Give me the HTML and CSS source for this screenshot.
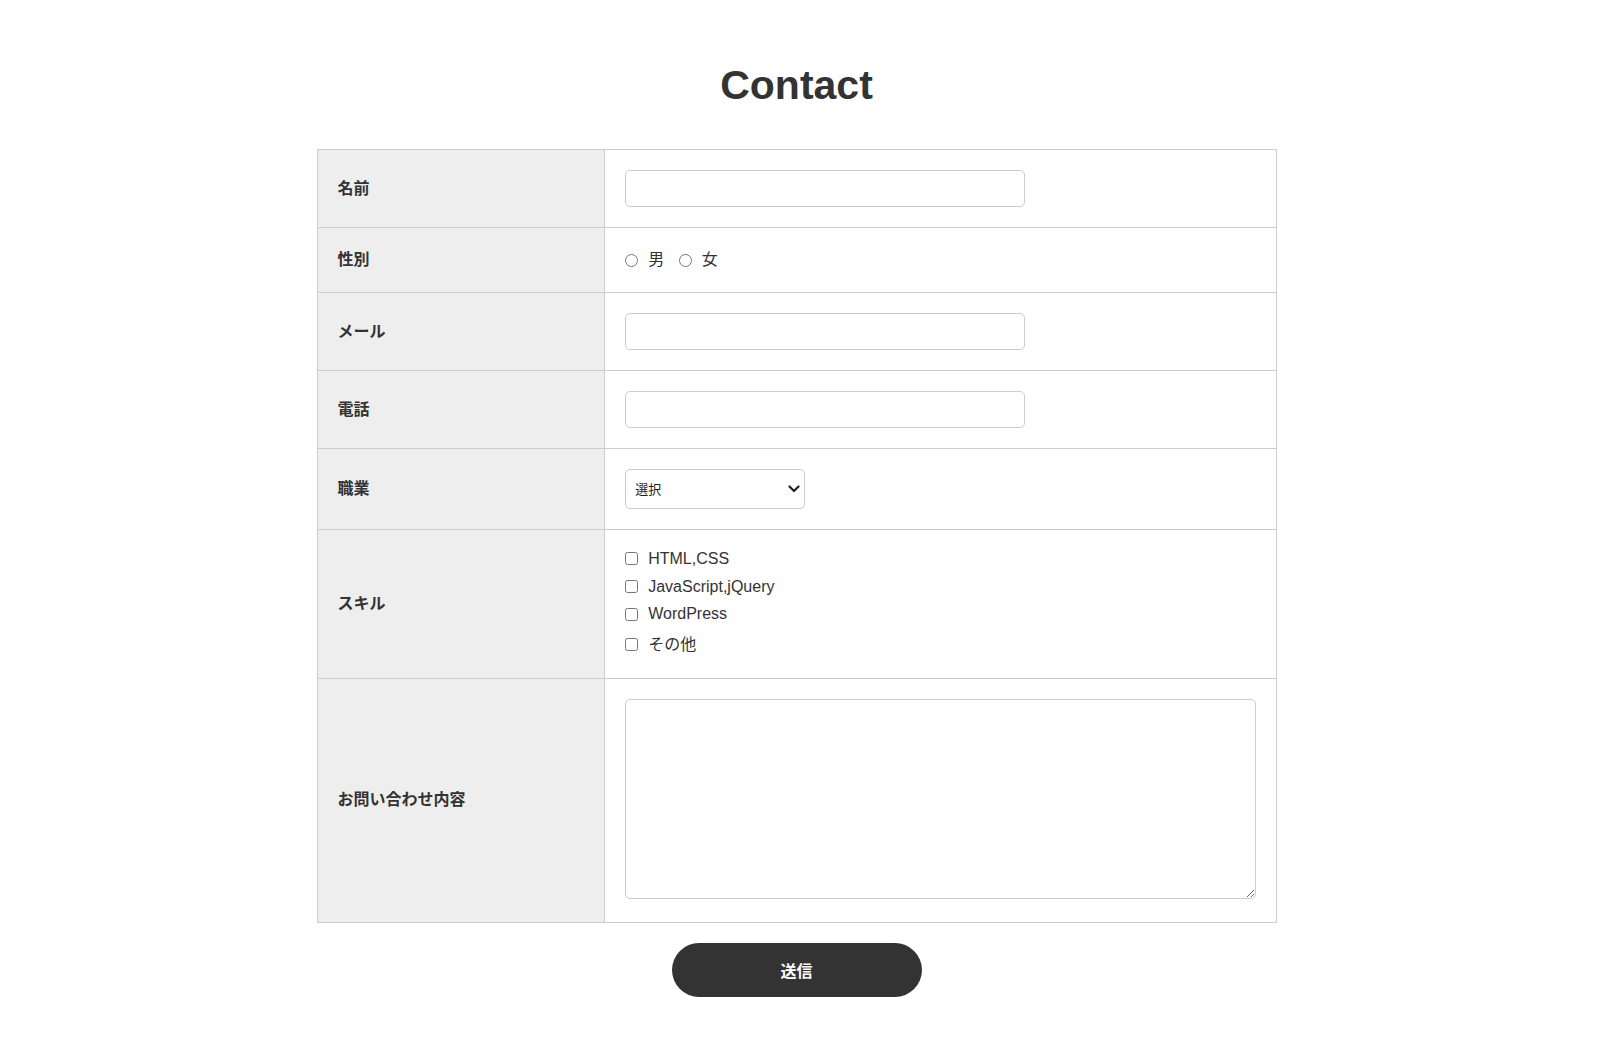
FILE: index.html
```html
<!DOCTYPE html>
<html lang="ja">
<head>
<meta charset="utf-8">
<title>Contact</title>
<link rel="stylesheet" href="styles.css">
</head>
<body>
<main class="wrap">
  <h1 class="title">Contact</h1>
  <form class="form">
    <table class="form-table">
      <tr class="row-input">
        <th>名前</th>
        <td><input class="text-input" type="text"></td>
      </tr>
      <tr class="row-radio">
        <th>性別</th>
        <td>
          <label class="radio"><input type="radio" name="sex"><span>男</span></label>
          <label class="radio"><input type="radio" name="sex"><span>女</span></label>
        </td>
      </tr>
      <tr class="row-input">
        <th>メール</th>
        <td><input class="text-input" type="email"></td>
      </tr>
      <tr class="row-input">
        <th>電話</th>
        <td><input class="text-input" type="tel"></td>
      </tr>
      <tr class="row-select">
        <th>職業</th>
        <td>
          <span class="select-wrap">
            <select class="select">
              <option>選択</option>
              <option>会社員</option>
              <option>学生</option>
              <option>その他</option>
            </select>
            <svg class="chevron" width="12" height="8" viewBox="0 0 12 8"><path d="M1.5 1.5 L6 6 L10.5 1.5" fill="none" stroke="#222" stroke-width="2.2" stroke-linecap="round" stroke-linejoin="round"/></svg>
          </span>
        </td>
      </tr>
      <tr class="row-check">
        <th>スキル</th>
        <td>
          <div class="checks">
            <label class="check"><input type="checkbox"><span>HTML,CSS</span></label>
            <label class="check"><input type="checkbox"><span>JavaScript,jQuery</span></label>
            <label class="check"><input type="checkbox"><span>WordPress</span></label>
            <label class="check check-last"><input type="checkbox"><span>その他</span></label>
          </div>
        </td>
      </tr>
      <tr class="row-textarea">
        <th>お問い合わせ内容</th>
        <td><textarea class="textarea"></textarea></td>
      </tr>
    </table>
    <button class="submit" type="button">送信</button>
  </form>
</main>
</body>
</html>
```

FILE: styles.css
```css
html, body {
  margin: 0;
  padding: 0;
  background: #fff;
}

body {
  font-family: "Liberation Sans", "Noto Sans CJK JP", sans-serif;
  color: #333;
  font-size: 16px;
}

/* right padding mirrors the scrollbar gutter of the original page */
.wrap {
  padding: 62px 15px 80px 0;
}

.title {
  margin: 0 0 41px;
  text-align: center;
  font-size: 41px;
  line-height: 46px;
  font-weight: bold;
  color: #333;
}

.form {
  width: 960px;
  margin: 0 auto;
}

.form-table {
  width: 960px;
  border-collapse: collapse;
  border: 1px solid #ccc;
}

.form-table th,
.form-table td {
  border: 1px solid #ccc;
  padding: 20px;
  vertical-align: middle;
  text-align: left;
}

.form-table th {
  width: 30%;
  box-sizing: border-box;
  background: #eee;
  font-weight: bold;
  font-size: 16px;
  line-height: 24px;
  color: #333;
}

.form-table td {
  font-size: 16px;
  line-height: 24px;
}

.text-input {
  display: block;
  box-sizing: border-box;
  width: 400px;
  height: 37px;
  border: 1px solid #ccc;
  border-radius: 5px;
  padding: 0 10px;
  font: inherit;
  margin: 0;
  background: #fff;
}

.radio {
  display: inline-flex;
  align-items: center;
  height: 24px;
  margin-right: 10px;
  vertical-align: top;
}

.radio input {
  margin: 0 10px 0 0;
  width: 13px;
  height: 13px;
}

.select-wrap {
  position: relative;
  display: inline-block;
  vertical-align: top;
}

.select {
  display: block;
  appearance: none;
  -webkit-appearance: none;
  box-sizing: border-box;
  width: 180px;
  height: 40px;
  border: 1px solid #ccc;
  border-radius: 5px;
  background: #fff;
  padding: 0 30px 0 9px;
  font-family: "Liberation Sans", "Noto Sans CJK JP", sans-serif;
  font-size: 13px;
  color: #222;
  margin: 0;
}

.chevron {
  position: absolute;
  right: 5px;
  top: 16px;
  pointer-events: none;
}

.checks {
  margin: -5px 0 -1px;
}

.check {
  display: flex;
  align-items: center;
  height: 27.7px;
}

.check-last {
  margin-top: 3px;
}

.check input {
  margin: 0 10px 0 0;
  width: 13px;
  height: 13px;
}

.textarea {
  display: block;
  box-sizing: border-box;
  width: 100%;
  height: 200px;
  margin: 0 0 3px;
  border: 1px solid #ccc;
  border-radius: 5px;
  font: inherit;
  resize: vertical;
}

.submit {
  display: block;
  width: 250px;
  height: 54px;
  margin: 20px auto 0;
  border: none;
  border-radius: 27px;
  background: #333;
  color: #fff;
  font-family: "Liberation Sans", "Noto Sans CJK JP", sans-serif;
  font-size: 16px;
  font-weight: bold;
  cursor: pointer;
}
```
